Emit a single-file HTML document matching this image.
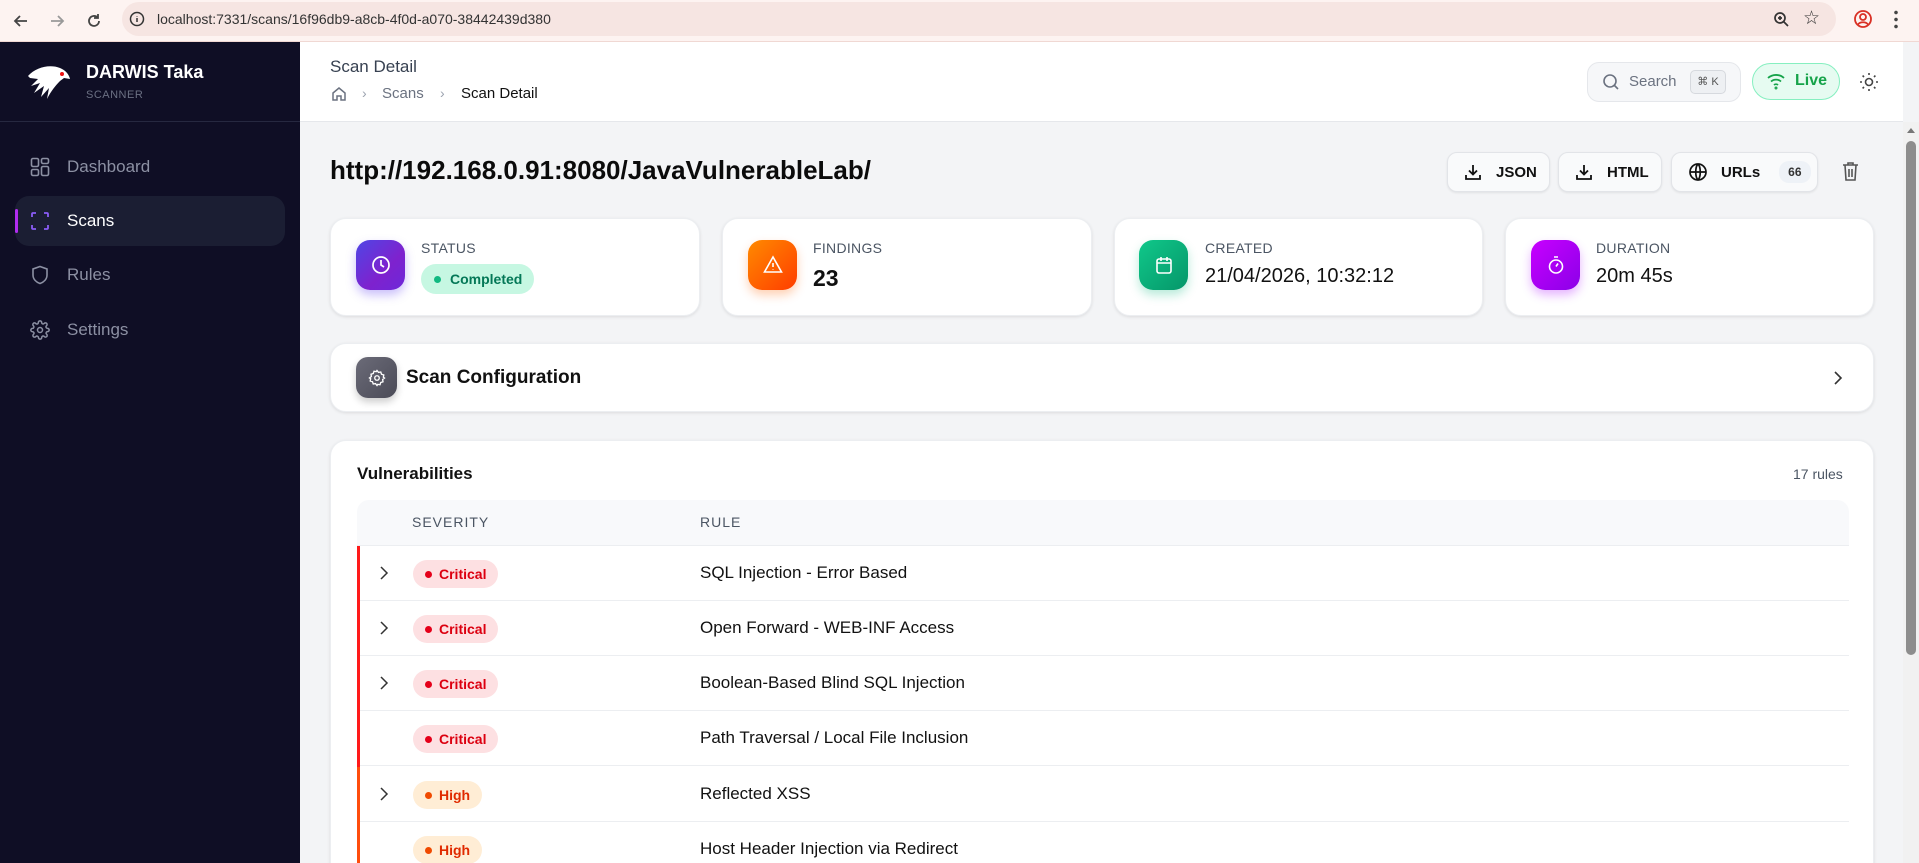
<!DOCTYPE html>
<html style="width:1919px;height:863px;overflow:hidden"><head><meta charset="utf-8"><style>
*{box-sizing:border-box;margin:0;padding:0}
body{width:1919px;height:863px;overflow:hidden;font-family:"Liberation Sans",sans-serif;background:#f3f4f6;position:relative;color:#111}
.abs{position:absolute}
.chrome{left:0;top:0;width:1919px;height:42px;background:#fdf3f1;border-bottom:1px solid #f0d8d3}
.pill{left:122px;top:2px;width:1714px;height:34px;border-radius:17px;background:#f6e5e2}
.side{left:0;top:42px;width:300px;height:821px;background:#0f0e25}
.nav{position:absolute;left:0;width:300px;height:50px;display:flex;align-items:center;font-size:17px;color:#8c90a3}
.nav svg{position:absolute;left:30px}
.nav span{position:absolute;left:67px}
.hdr{left:300px;top:42px;width:1603px;height:80px;background:#fff;border-bottom:1px solid #e5e7eb}
.card{position:absolute;background:#fff;border-radius:16px;box-shadow:0 1px 3px rgba(0,0,0,.1);border:1px solid #eceef1}
.ic{position:absolute;border-radius:14px;display:flex;align-items:center;justify-content:center}
.lbl{position:absolute;font-size:14px;color:#4b5563;letter-spacing:.3px}
.val{position:absolute;font-size:20px;color:#111}
.btn{position:absolute;top:152px;height:40px;background:#f9fafb;border:1px solid #e2e4e8;border-radius:10px;box-shadow:0 1px 2px rgba(0,0,0,.08);display:flex;align-items:center;font-weight:bold;font-size:15px;color:#111}
.row{position:absolute;left:357px;width:1492px;height:55px;border-bottom:1px solid #eceef1}
.row .bar{position:absolute;left:0;top:0;width:3px;height:56px}
.row .chev{position:absolute;left:22px;top:19px}
.badge{position:absolute;left:56px;top:14px;height:28px;border-radius:14px;font-size:14px;font-weight:bold;display:flex;align-items:center;padding:0 12px 0 12px}
.badge i{display:inline-block;width:7px;height:7px;border-radius:50%;margin-right:7px}
.row .rule{position:absolute;left:343px;top:17px;font-size:17px;color:#111}
</style></head><body>
<div class="abs chrome"></div>
<div class="abs pill"></div>
<svg class="abs" style="left:12px;top:12px" width="18" height="18" viewBox="0 0 18 18" fill="none" stroke="#444" stroke-width="1.8"><path d="M15 9H3M8 4L3 9l5 5"/></svg>
<svg class="abs" style="left:48px;top:12px" width="18" height="18" viewBox="0 0 18 18" fill="none" stroke="#999" stroke-width="1.8"><path d="M3 9h12M10 4l5 5-5 5"/></svg>
<svg class="abs" style="left:85px;top:12px" width="18" height="18" viewBox="0 0 18 18" fill="none" stroke="#444" stroke-width="1.8"><path d="M14 9a5 5 0 1 1-1.5-3.6M13 2v4h-4"/></svg>
<svg class="abs" style="left:129px;top:11px" width="16" height="16" viewBox="0 0 16 16" fill="none" stroke="#333" stroke-width="1.5"><circle cx="8" cy="8" r="6.5"/><path d="M8 7v4M8 5v.5"/></svg>
<div class="abs" style="left:157px;top:11px;font-size:14px;color:#333">localhost:7331/scans/16f96db9-a8cb-4f0d-a070-38442439d380</div>
<svg class="abs" style="left:1773px;top:11px" width="17" height="17" viewBox="0 0 17 17" fill="none" stroke="#333" stroke-width="1.7"><circle cx="7" cy="7" r="5"/><path d="M11 11l4 4M7 5v4M5 7h4"/></svg>
<div class="abs" style="left:1803px;top:7px;font-size:19px;color:#333">☆</div>
<svg class="abs" style="left:1853px;top:9px" width="20" height="20" viewBox="0 0 20 20" fill="none" stroke="#d93025" stroke-width="1.8"><circle cx="10" cy="10" r="8"/><circle cx="10" cy="8" r="3"/><path d="M5 15.5c2-3 8-3 10 0"/></svg>
<div class="abs" style="left:1894px;top:9px;width:4px;height:20px;background:radial-gradient(circle,#444 1.6px,transparent 2px) 0 0/4px 7px"></div>

<div class="abs side"></div>
<svg class="abs" style="left:26px;top:60px" width="46" height="44" viewBox="0 0 46 44"><path d="M2 16C10 7 24 4 34 8c5 2 9 6 10 11l-6-1-4 3c-4 4-9 10-13 18l2-11-8 9 3-11-10 7 6-10-9 3 7-7-8-1z" fill="#fff"/><circle cx="36" cy="14" r="2" fill="#e11"/></svg>
<div class="abs" style="left:86px;top:62px;font-size:18px;font-weight:bold;color:#fff">DARWIS Taka</div>
<div class="abs" style="left:86px;top:89px;font-size:11px;color:#6b7083;letter-spacing:.5px">SCANNER</div>
<div class="abs" style="left:0;top:121px;width:300px;height:1px;background:#262840"></div>
<div class="nav" style="top:142px"><svg width="20" height="20" viewBox="0 0 20 20" fill="none" stroke="#8c90a3" stroke-width="1.6"><rect x="1.5" y="1.5" width="7" height="8" rx="1.5"/><rect x="11.5" y="1.5" width="7" height="5" rx="1.5"/><rect x="1.5" y="12.5" width="7" height="6" rx="1.5"/><rect x="11.5" y="9.5" width="7" height="9" rx="1.5"/></svg><span>Dashboard</span></div>
<div class="abs" style="left:15px;top:196px;width:270px;height:50px;border-radius:14px;background:#1b1e33"></div>
<div class="abs" style="left:15px;top:209px;width:3px;height:24px;background:#b02cf0;border-radius:2px"></div>
<div class="nav" style="top:196px;color:#fff"><svg width="20" height="20" viewBox="0 0 20 20" fill="none" stroke="#8b5cf6" stroke-width="1.8"><path d="M2 6V3a1 1 0 0 1 1-1h3M14 2h3a1 1 0 0 1 1 1v3M18 14v3a1 1 0 0 1-1 1h-3M6 18H3a1 1 0 0 1-1-1v-3"/></svg><span>Scans</span></div>
<div class="nav" style="top:250px"><svg width="20" height="20" viewBox="0 0 20 20" fill="none" stroke="#8c90a3" stroke-width="1.6"><path d="M10 1.5l7 2.5v6c0 4-3 7-7 8.5C6 17 3 14 3 10V4z"/></svg><span>Rules</span></div>
<div class="nav" style="top:305px"><svg width="20" height="20" viewBox="0 0 24 24" fill="none" stroke="#8c90a3" stroke-width="1.8"><circle cx="12" cy="12" r="3"/><path d="M19.4 15a1.7 1.7 0 0 0 .3 1.8l.1.1a2 2 0 1 1-2.8 2.8l-.1-.1a1.7 1.7 0 0 0-1.8-.3 1.7 1.7 0 0 0-1 1.5V21a2 2 0 1 1-4 0v-.1a1.7 1.7 0 0 0-1.1-1.5 1.7 1.7 0 0 0-1.8.3l-.1.1a2 2 0 1 1-2.8-2.8l.1-.1a1.7 1.7 0 0 0 .3-1.8 1.7 1.7 0 0 0-1.5-1H3a2 2 0 1 1 0-4h.1a1.7 1.7 0 0 0 1.5-1.1 1.7 1.7 0 0 0-.3-1.8l-.1-.1a2 2 0 1 1 2.8-2.8l.1.1a1.7 1.7 0 0 0 1.8.3H9a1.7 1.7 0 0 0 1-1.5V3a2 2 0 1 1 4 0v.1a1.7 1.7 0 0 0 1 1.5 1.7 1.7 0 0 0 1.8-.3l.1-.1a2 2 0 1 1 2.8 2.8l-.1.1a1.7 1.7 0 0 0-.3 1.8V9a1.7 1.7 0 0 0 1.5 1H21a2 2 0 1 1 0 4h-.1a1.7 1.7 0 0 0-1.5 1z"/></svg><span>Settings</span></div>

<div class="abs hdr"></div>
<div class="abs" style="left:330px;top:57px;font-size:17px;color:#374151">Scan Detail</div>
<svg class="abs" style="left:331px;top:86px" width="16" height="16" viewBox="0 0 16 16" fill="none" stroke="#6b7280" stroke-width="1.5"><path d="M2 7l6-5 6 5v7H10v-4H6v4H2z"/></svg>
<div class="abs" style="left:362px;top:85px;font-size:14px;color:#9ca3af">›</div>
<div class="abs" style="left:382px;top:85px;font-size:15px;color:#6b7280">Scans</div>
<div class="abs" style="left:440px;top:85px;font-size:14px;color:#9ca3af">›</div>
<div class="abs" style="left:461px;top:85px;font-size:15px;color:#111;font-weight:500">Scan Detail</div>
<div class="abs" style="left:1587px;top:62px;width:154px;height:40px;border-radius:12px;background:#f6f7f9;border:1px solid #e5e7eb"></div>
<svg class="abs" style="left:1602px;top:73px" width="18" height="18" viewBox="0 0 18 18" fill="none" stroke="#6b7280" stroke-width="1.6"><circle cx="8" cy="8" r="6"/><path d="M12.5 12.5L16 16"/></svg>
<div class="abs" style="left:1629px;top:73px;font-size:15px;color:#6b7280">Search</div>
<div class="abs" style="left:1690px;top:70px;width:36px;height:24px;border-radius:5px;border:1px solid #d6d9de;background:#eef0f3;font-size:11px;color:#555;text-align:center;line-height:22px">⌘ K</div>
<div class="abs" style="left:1752px;top:63px;width:88px;height:37px;border-radius:19px;background:#e6fbf1;border:1px solid #86efc0"></div>
<svg class="abs" style="left:1766px;top:72px" width="20" height="18" viewBox="0 0 20 18" fill="none" stroke="#16a34a" stroke-width="1.8"><path d="M2 6a12 12 0 0 1 16 0M5 9.5a7.5 7.5 0 0 1 10 0M8 13a3 3 0 0 1 4 0"/><circle cx="10" cy="16" r=".6"/></svg>
<div class="abs" style="left:1795px;top:72px;font-size:16px;font-weight:bold;color:#16a34a">Live</div>
<svg class="abs" style="left:1859px;top:72px" width="20" height="20" viewBox="0 0 20 20" fill="none" stroke="#444" stroke-width="1.6"><circle cx="10" cy="10" r="3.5"/><path d="M10 1v2M10 17v2M1 10h2M17 10h2M3.6 3.6l1.4 1.4M15 15l1.4 1.4M3.6 16.4L5 15M15 5l1.4-1.4"/></svg>

<div class="abs" style="left:1903px;top:122px;width:16px;height:741px;background:#f1f1f1"></div>
<div class="abs" style="left:1907px;top:128px;width:0;height:0;border-left:4px solid transparent;border-right:4px solid transparent;border-bottom:5px solid #777"></div>
<div class="abs" style="left:1906px;top:141px;width:10px;height:514px;border-radius:5px;background:#8d8d8d"></div>

<div class="abs" style="left:330px;top:155px;font-size:26px;font-weight:bold;color:#0b0b0b">http://192.168.0.91:8080/JavaVulnerableLab/</div>
<div class="btn" style="left:1447px;width:103px"><svg style="margin:0 14px 0 16px" width="18" height="18" viewBox="0 0 18 18" fill="none" stroke="#111" stroke-width="1.8"><path d="M9 2v9M5 7.5l4 4 4-4M2 12v4h14v-4"/></svg>JSON</div>
<div class="btn" style="left:1558px;width:104px"><svg style="margin:0 14px 0 16px" width="18" height="18" viewBox="0 0 18 18" fill="none" stroke="#111" stroke-width="1.8"><path d="M9 2v9M5 7.5l4 4 4-4M2 12v4h14v-4"/></svg>HTML</div>
<div class="btn" style="left:1671px;width:147px"><svg style="margin:0 13px 0 16px" width="20" height="20" viewBox="0 0 20 20" fill="none" stroke="#111" stroke-width="1.7"><circle cx="10" cy="10" r="8"/><path d="M2 10h16M10 2c3 3 3 13 0 16M10 2c-3 3-3 13 0 16"/></svg>URLs<span style="margin-left:19px;background:#eef2f7;border-radius:10px;font-size:12px;padding:4px 9px;color:#333">66</span></div>
<svg class="abs" style="left:1841px;top:161px" width="19" height="21" viewBox="0 0 19 21" fill="none" stroke="#555" stroke-width="1.6"><path d="M2 4h15M7 4V2h5v2M4 4l1 15h9l1-15M8 8v8M11 8v8"/></svg>

<div class="card" style="left:330px;top:218px;width:370px;height:98px"></div>
<div class="ic" style="left:356px;top:240px;width:49px;height:50px;background:linear-gradient(135deg,#4f46e5,#7e22ce 60%,#6d28d9);box-shadow:0 5px 10px rgba(99,70,240,.35)"><svg width="20" height="20" viewBox="0 0 20 20" fill="none" stroke="#fff" stroke-width="1.7"><circle cx="10" cy="10" r="8"/><path d="M10 5v5l3 2"/></svg></div>
<div class="lbl" style="left:421px;top:240px">STATUS</div>
<div class="abs" style="left:421px;top:264px;width:113px;height:30px;border-radius:15px;background:#c6f7e2;color:#047857;font-size:14px;font-weight:bold;line-height:30px;padding-left:29px">Completed</div>
<div class="abs" style="left:434px;top:276px;width:7px;height:7px;border-radius:50%;background:#10b981"></div>

<div class="card" style="left:722px;top:218px;width:370px;height:98px"></div>
<div class="ic" style="left:748px;top:240px;width:49px;height:50px;background:linear-gradient(135deg,#ff8a00,#ff3d00);box-shadow:0 5px 10px rgba(255,100,0,.3)"><svg width="20" height="20" viewBox="0 0 20 20" fill="none" stroke="#fff" stroke-width="1.6"><path d="M10 2L1.5 17h17z M10 8v4M10 14v.5"/></svg></div>
<div class="lbl" style="left:813px;top:240px">FINDINGS</div>
<div class="val" style="left:813px;top:265px;font-weight:bold;font-size:23px">23</div>

<div class="card" style="left:1114px;top:218px;width:369px;height:98px"></div>
<div class="ic" style="left:1139px;top:240px;width:49px;height:50px;background:linear-gradient(135deg,#10c88a,#059669);box-shadow:0 5px 10px rgba(16,185,129,.3)"><svg width="20" height="20" viewBox="0 0 20 20" fill="none" stroke="#fff" stroke-width="1.6"><rect x="3" y="4" width="14" height="14" rx="2"/><path d="M3 8h14M7 2v4M13 2v4"/></svg></div>
<div class="lbl" style="left:1205px;top:240px">CREATED</div>
<div class="val" style="left:1205px;top:265px">21/04/2026, 10:32:12</div>

<div class="card" style="left:1505px;top:218px;width:369px;height:98px"></div>
<div class="ic" style="left:1531px;top:240px;width:49px;height:50px;background:linear-gradient(135deg,#c800ff,#8b00e8);box-shadow:0 5px 10px rgba(170,0,255,.3)"><svg width="20" height="20" viewBox="0 0 20 20" fill="none" stroke="#fff" stroke-width="1.6"><circle cx="10" cy="11.5" r="6.5"/><path d="M8 2h4M10 11.5l2-3"/></svg></div>
<div class="lbl" style="left:1596px;top:240px">DURATION</div>
<div class="val" style="left:1596px;top:265px">20m 45s</div>

<div class="card" style="left:330px;top:343px;width:1544px;height:69px"></div>
<div class="ic" style="left:356px;top:357px;width:41px;height:41px;border-radius:12px;background:linear-gradient(135deg,#6b6b78,#4b4b57);box-shadow:0 4px 8px rgba(0,0,0,.2)"><svg width="18" height="18" viewBox="0 0 24 24" fill="none" stroke="#fff" stroke-width="1.8"><circle cx="12" cy="12" r="3"/><path d="M12 2l2 2.5 3-.5 1 3 3 1-.5 3L22 12l-2.5 2 .5 3-3 1-1 3-3-.5L12 22l-2-2.5-3 .5-1-3-3-1 .5-3L2 12l2.5-2-.5-3 3-1 1-3 3 .5z"/></svg></div>
<div class="abs" style="left:406px;top:367px;font-size:19px;font-weight:bold;color:#111">Scan Configuration</div>
<svg class="abs" style="left:1832px;top:370px" width="12" height="16" viewBox="0 0 12 16" fill="none" stroke="#333" stroke-width="1.6"><path d="M3 2l6 6-6 6"/></svg>

<div class="card" style="left:330px;top:440px;width:1544px;height:440px"></div>
<div class="abs" style="left:357px;top:464px;font-size:17px;font-weight:bold;color:#111">Vulnerabilities</div>
<div class="abs" style="left:1793px;top:466px;font-size:14px;color:#4b5563">17 rules</div>
<div class="abs" style="left:357px;top:500px;width:1492px;height:46px;background:#f8f9fb;border-radius:12px 12px 0 0;border-bottom:1px solid #eceef1"></div>
<div class="abs" style="left:412px;top:514px;font-size:14px;color:#4b5563;letter-spacing:1px;font-weight:500">SEVERITY</div>
<div class="abs" style="left:700px;top:514px;font-size:14px;color:#4b5563;letter-spacing:1px;font-weight:500">RULE</div>

<div class="row" style="top:546px"><div class="bar" style="background:#ff1a1a"></div><svg class="chev" width="10" height="16" viewBox="0 0 10 16" fill="none" stroke="#333" stroke-width="1.5"><path d="M2 2l6 6-6 6"/></svg><div class="badge" style="background:#fde0e2;color:#dc0010"><i style="background:#e5001a"></i>Critical</div><div class="rule">SQL Injection - Error Based</div></div>
<div class="row" style="top:601px"><div class="bar" style="background:#ff1a1a"></div><svg class="chev" width="10" height="16" viewBox="0 0 10 16" fill="none" stroke="#333" stroke-width="1.5"><path d="M2 2l6 6-6 6"/></svg><div class="badge" style="background:#fde0e2;color:#dc0010"><i style="background:#e5001a"></i>Critical</div><div class="rule">Open Forward - WEB-INF Access</div></div>
<div class="row" style="top:656px"><div class="bar" style="background:#ff1a1a"></div><svg class="chev" width="10" height="16" viewBox="0 0 10 16" fill="none" stroke="#333" stroke-width="1.5"><path d="M2 2l6 6-6 6"/></svg><div class="badge" style="background:#fde0e2;color:#dc0010"><i style="background:#e5001a"></i>Critical</div><div class="rule">Boolean-Based Blind SQL Injection</div></div>
<div class="row" style="top:711px"><div class="bar" style="background:#ff1a1a"></div><div class="badge" style="background:#fde0e2;color:#dc0010"><i style="background:#e5001a"></i>Critical</div><div class="rule">Path Traversal / Local File Inclusion</div></div>
<div class="row" style="top:767px"><div class="bar" style="background:#ff4d0d"></div><svg class="chev" width="10" height="16" viewBox="0 0 10 16" fill="none" stroke="#333" stroke-width="1.5"><path d="M2 2l6 6-6 6"/></svg><div class="badge" style="background:#ffedd5;color:#e02a00"><i style="background:#f04a00"></i>High</div><div class="rule">Reflected XSS</div></div>
<div class="row" style="top:822px"><div class="bar" style="background:#ff4d0d"></div><div class="badge" style="background:#ffedd5;color:#e02a00"><i style="background:#f04a00"></i>High</div><div class="rule">Host Header Injection via Redirect</div></div>
</body></html>
